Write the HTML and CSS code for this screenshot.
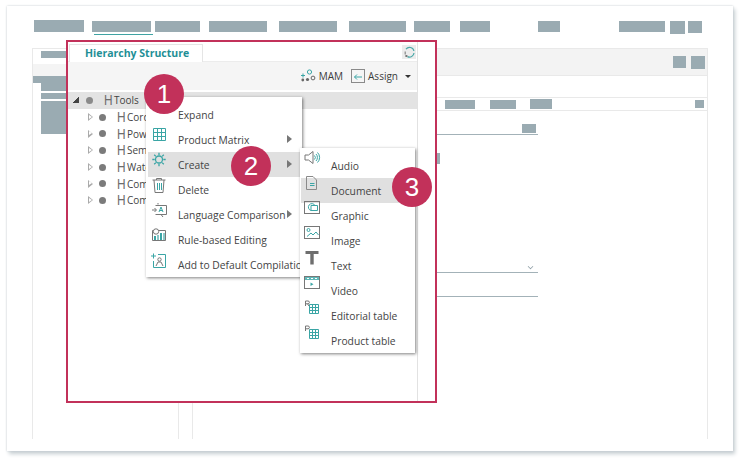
FILE: index.html
```html
<!DOCTYPE html>
<html lang="en">
<head>
<meta charset="utf-8">
<title>Hierarchy Structure</title>
<link rel="stylesheet" href="styles.css">
</head>
<body>
<div class="card">
  <nav class="nav">
    <span class="r n1"></span>
    <span class="r n2 active"></span>
    <span class="r n3"></span>
    <span class="r n4"></span>
    <span class="r n5"></span>
    <span class="r n6"></span>
    <span class="r n7"></span>
    <span class="r n8"></span>
    <span class="r n9"></span>
    <span class="r n10"></span>
    <span class="r n11"></span>
    <span class="r n12"></span>
  </nav>
  <div class="workspace">
    <aside class="left">
      <div class="left-top"><span class="r lt"></span></div>
      <div class="left-band"></div>
      <div class="r l1"></div>
      <div class="r l2"></div>
      <div class="r l3"></div>
      <div class="r l4"></div>
    </aside>
    <main class="right">
      <div class="right-head"><span class="r rh1"></span><span class="r rh2"></span></div>
      <div class="right-tabs">
        <span class="r rt1"></span><span class="r rt2"></span><span class="r rt3"></span><span class="r rt4"></span>
      </div>
      <div class="form">
        <div class="field f1"><span class="r fb"></span></div>
        <div class="r fc"></div>
        <div class="field f2"><span class="chev"></span></div>
        <div class="field f3"></div>
      </div>
    </main>
  </div>

  <section class="frame">
    <div class="panel">
      <div class="tabbar">
        <div class="tab">Hierarchy Structure</div>
        <button class="refresh" aria-label="Refresh">
          <svg width="13" height="13" viewBox="0 0 13 13" fill="none"><path d="M3 3.2A4.4 4.4 0 0 1 10.9 5" stroke="#4aa8a8" stroke-width="1.2"/><path d="M11 7a4.5 4.5 0 0 1-6.5 3.6" stroke="#4aa8a8" stroke-width="1.2"/><path d="M2.2 5.5v3" stroke="#888" stroke-width="1.2"/><rect x="2.4" y="9" width="2" height="2" fill="#777"/></svg>
        </button>
      </div>
      <div class="toolbar">
        <span class="tool">
          <svg width="15" height="15" viewBox="0 0 15 15" fill="none"><circle cx="8.5" cy="3" r="2.1" stroke="#3aa5a5"/><circle cx="12" cy="9" r="1.9" stroke="#666"/><circle cx="6.5" cy="10.5" r="1.6" fill="#666"/><circle cx="1.8" cy="11" r="1.4" fill="#666"/><path d="M0 6.5h4M2 4.5v4" stroke="#3aa5a5"/></svg>
          MAM
        </span>
        <span class="tool assign">
          <svg width="14" height="14" viewBox="0 0 14 14" fill="none"><rect x=".5" y=".5" width="13" height="13" stroke="#8a8a8a"/><path d="M11 8H3.5M6 5.5 3.5 8 6 10.5" stroke="#3aa5a5"/></svg>
          Assign
        </span>
        <span class="caret"></span>
      </div>
      <ul class="tree">
        <li class="node root"><i class="tw open"></i><i class="dot"></i><b class="h">H</b><span>Tools</span></li>
        <li class="node"><i class="tw"></i><i class="dot"></i><b class="h">H</b><span>Cordless</span></li>
        <li class="node"><i class="tw"></i><i class="dot"></i><b class="h">H</b><span>Power</span></li>
        <li class="node"><i class="tw"></i><i class="dot"></i><b class="h">H</b><span>Semi</span></li>
        <li class="node"><i class="tw"></i><i class="dot"></i><b class="h">H</b><span>Water</span></li>
        <li class="node"><i class="tw"></i><i class="dot"></i><b class="h">H</b><span>Compact</span></li>
        <li class="node"><i class="tw"></i><i class="dot"></i><b class="h">H</b><span>Compressed</span></li>
      </ul>
    </div>

    <ul class="menu main-menu">
      <li><span class="ico"><svg width="16" height="16" viewBox="0 0 16 16" fill="none"><path d="M6 9.5 7 11l2-2.5" stroke="#777"/></svg></span>Expand</li>
      <li class="sub"><span class="ico"><svg width="16" height="16" viewBox="0 0 16 16" fill="none"><path d="M2.5 1.5h12v12h-12zM2.500 5.500h12M2.500 9.500h12M6.500 1.500v12M10.500 1.500v12" stroke="#3aa5a5"/></svg></span>Product Matrix</li>
      <li class="sub on"><span class="ico"><svg width="16" height="16" viewBox="0 0 16 16" fill="none"><circle cx="8" cy="7.500" r="3.500" stroke="#3aa5a5" stroke-width="1.300"/><path d="M8 .8v2.400M8 11.800v2.400M1.300 7.500h2.400M12.300 7.500h2.400M3.200 2.700l1.700 1.700M11.100 10.600l1.700 1.700M3.200 12.300l1.700-1.700M11.100 4.400l1.700-1.700" stroke="#3aa5a5" stroke-width="1.300"/></svg></span>Create</li>
      <li><span class="ico"><svg width="16" height="16" viewBox="0 0 16 16" fill="none"><path d="M1.500 3h13M5.500 3V1.500h5V3M3 3l1 12.500h8L13 3" stroke="#777"/><path d="M6.500 6v7M8.500 6v7M10.500 6v7" stroke="#3aa5a5"/></svg></span>Delete</li>
      <li class="sub"><span class="ico"><svg width="17" height="16" viewBox="0 0 17 16" fill="none"><path d="M4.500 3.500h11v9h-11" stroke="#777"/><path d="M1 8h4M3.500 6 5.500 8l-2 2M7 2.500V1M12 15l-2-2.500" stroke="#777"/><path d="M8 10l2-5 2 5M8.800 8.500h2.500" stroke="#3aa5a5"/></svg></span>Language Comparison</li>
      <li><span class="ico"><svg width="16" height="16" viewBox="0 0 16 16" fill="none"><path d="M1.500 3.500h13v10h-13z" stroke="#777"/><circle cx="5" cy="4.500" r="2.700" fill="#fff" stroke="#777"/><rect x="3" y="9" width="2" height="4" fill="#3aa5a5"/><rect x="6" y="8" width="2" height="5" fill="#8cc9c9"/><rect x="9" y="6" width="2" height="7" fill="#3aa5a5"/><rect x="12" y="6" width="2" height="7" fill="#8cc9c9"/></svg></span>Rule-based Editing</li>
      <li><span class="ico"><svg width="16" height="17" viewBox="0 0 16 17" fill="none"><path d="M0 4h5M2.500 1.500v5M7 2.500h7.500v13H2.500V9" stroke="#3aa5a5"/><circle cx="8.500" cy="7.500" r="1.700" stroke="#777"/><path d="M5 14l2-4h3l2 4" stroke="#777"/></svg></span>Add to Default Compilation</li>
    </ul>

    <ul class="menu sub-menu">
      <li><span class="ico"><svg width="17" height="16" viewBox="0 0 17 16" fill="none"><path d="M1 5h3.500L9 1.500v12L4.500 10H1z" stroke="#777"/><path d="M10.500 5.500a3 3 0 0 1 0 4M12 4a5 5 0 0 1 0 7M13.500 2.500a7 7 0 0 1 0 10" stroke="#3aa5a5"/></svg></span>Audio</li>
      <li class="on"><span class="ico"><svg width="15" height="16" viewBox="0 0 15 16" fill="none"><path d="M2.500 1.500h6.500l3.500 3.500v9.500h-10z" stroke="#8a8a8a"/><path d="M6 8.500h4.500M6 10.500h4.500" stroke="#3aa5a5"/></svg></span>Document</li>
      <li><span class="ico"><svg width="16" height="16" viewBox="0 0 16 16" fill="none"><rect x=".5" y="1.500" width="15" height="12" stroke="#777"/><path d="M11 5.500A3.500 3.500 0 1 0 7 10.500M7 10.500V5.500h6.500v5z" stroke="#3aa5a5"/></svg></span>Graphic</li>
      <li><span class="ico"><svg width="16" height="16" viewBox="0 0 16 16" fill="none"><rect x=".5" y="1.500" width="15" height="12" stroke="#777"/><circle cx="4.500" cy="5" r="1.500" stroke="#3aa5a5"/><path d="M3 11.500 7 8l2 2 3-3 2.500 3" stroke="#3aa5a5"/></svg></span>Image</li>
      <li><span class="ico"><svg width="16" height="16" viewBox="0 0 16 16"><path d="M1.500 1h13v3H9.700v10.500H6.300V4H1.500z" fill="#6e6e6e"/></svg></span>Text</li>
      <li><span class="ico"><svg width="16" height="16" viewBox="0 0 16 16" fill="none"><rect x=".5" y="1.500" width="15" height="12" stroke="#777"/><rect x="1" y="2" width="14" height="3" fill="#5fb8b8"/><path d="M3 3.500h2M7 3.500h2M11 3.500h2" stroke="#fff"/><path d="M6.500 7.500v3.500l3-1.700z" fill="#3aa5a5"/></svg></span>Video</li>
      <li><span class="ico"><svg width="16" height="16" viewBox="0 0 16 16" fill="none"><path d="M5.500 4.500h9v9h-9zM5.500 7.500h9M5.500 10.500h9M8.500 4.500v9M11.500 4.500v9" stroke="#3aa5a5"/><path d="M1.500 6V1h2.500a1.300 1.300 0 0 1 0 2.800H1.500M3.500 3.800 5 6" stroke="#777"/></svg></span>Editorial table</li>
      <li><span class="ico"><svg width="16" height="16" viewBox="0 0 16 16" fill="none"><path d="M5.500 4.500h9v9h-9zM5.500 7.500h9M5.500 10.500h9M8.500 4.500v9M11.500 4.500v9" stroke="#3aa5a5"/><path d="M1.500 6V1h2.500a1.300 1.300 0 0 1 0 2.800H1.500" stroke="#777"/></svg></span>Product table</li>
    </ul>

    <span class="badge b1">1</span>
    <span class="badge b2">2</span>
    <span class="badge b3">3</span>
  </section>
</div>
</body>
</html>
```

FILE: styles.css
```css
* { box-sizing: border-box; }
html, body { margin: 0; padding: 0; background: #fff; }
body { width: 741px; height: 459px; overflow: hidden; font-family: "Open Sans", "Liberation Sans", sans-serif; }
ul { list-style: none; margin: 0; padding: 0; }
.r { display: block; background: #9aabb2; }

.card {
  position: relative;
  width: 726px;
  height: 445px;
  margin: 6px 0 0 7px;
  padding: 14px 0 0 0;
  background: #fff;
  box-shadow: 0 0 2px #c6ced2, 2px 3px 4px #c6ced2;
}

.nav { display: flex; align-items: flex-start; height: 14px; padding-left: 27px; }
.n1 { width: 50px; height: 12px; }
.n2 { width: 59px; height: 11px; margin: 1px 0 0 8px; box-shadow: 2px 2px 0 -0px #fff, 2px 3px 0 0 #3fa3a3; }
.n3 { width: 45px; height: 11px; margin: 1px 0 0 4px; }
.n4 { width: 58px; height: 11px; margin: 1px 0 0 9px; }
.n5 { width: 58px; height: 11px; margin: 1px 0 0 12px; }
.n6 { width: 57px; height: 11px; margin: 1px 0 0 12px; }
.n7 { width: 36px; height: 11px; margin: 1px 0 0 8px; }
.n8 { width: 30px; height: 11px; margin: 1px 0 0 10px; }
.n9 { width: 22px; height: 11px; margin: 1px 0 0 48px; box-shadow: 44px 1px 0 -0px #fff; }
.n10 { width: 46px; height: 11px; margin: 1px 0 0 59px; }
.n11 { width: 15px; height: 13px; margin: 1px 0 0 5px; }
.n12 { width: 14px; height: 12px; margin: 1px 0 0 3px; }

.workspace { display: flex; height: 391px; margin-top: 14px; padding-left: 25px; gap: 13px; }
.left { width: 147px; height: 100%; border-left: 1px solid #e9e9e9; border-right: 1px solid #e9e9e9; border-top: 1px solid #e9e9e9; }
.left-top { height: 15px; padding: 2px 0 0 8px; }
.lt { width: 30px; height: 7px; }
.left-band { height: 12px; background: #f4f4f4; margin-bottom: 0; }
.l1 { width: 34px; height: 7px; }
.l2 { width: 26px; height: 8px; margin-left: 8px; }
.l3 { width: 26px; height: 6px; margin: 2px 0 0 8px; }
.l4 { width: 26px; height: 33px; margin: 2px 0 0 8px; }

.right { width: 516px; height: 100%; border-left: 1px solid #e9e9e9; border-right: 1px solid #e9e9e9; }
.right-head { display: flex; justify-content: flex-end; align-items: center; gap: 5px; height: 28px; padding-right: 2px; background: #f3f3f3; border-top: 1px solid #e9e9e9; border-bottom: 1px solid #e9e9e9; }
.rh1 { width: 13px; height: 12px; }
.rh2 { width: 14px; height: 13px; }
.right-tabs { display: flex; align-items: center; height: 14px; margin-top: 21px; padding-left: 252px; border-top: 1px solid #e9e9e9; border-bottom: 1px solid #e9e9e9; }
.rt1 { width: 30px; height: 9px; }
.rt2 { width: 26px; height: 9px; margin-left: 15px; }
.rt3 { width: 22px; height: 10px; margin-left: 14px; }
.rt4 { width: 9px; height: 8px; margin-left: 143px; }

.form { width: 118px; margin: 13px 0 0 227px; }
.field { border-bottom: 1px solid #a3b2b8; display: flex; justify-content: flex-end; align-items: flex-end; }
.f1 { height: 11px; padding: 0 2px 1px 0; }
.fb { width: 14px; height: 9px; }
.fc { width: 3px; height: 11px; margin: 18px 0 0 17px; }
.f2 { height: 109px; padding: 0 5px 3px 0; }
.chev { display: block; width: 5px; height: 5px; border-right: 1.500px solid #8b9ca3; border-bottom: 1.500px solid #8b9ca3; transform: rotate(45deg) scale(.8); }
.f3 { height: 24px; }

.frame {
  position: absolute;
  left: 59px;
  top: 34px;
  width: 371px;
  height: 363px;
  border: 2px solid #c2315a;
  background: #fff;
}
.panel { width: 350px; height: 100%; border-right: 1px solid #e2e2e2; }
.tabbar { display: flex; justify-content: space-between; align-items: flex-end; height: 20px; padding-left: 1px; border-bottom: 1px solid #ececec; }
.tab { width: 134px; height: 18px; margin-bottom: -1px; padding-left: 15px; border: 1px solid #e5e5e5; border-bottom: 0; background: #fff; color: #1f8f96; font-size: 10.500px; font-weight: 700; line-height: 16px; }
.refresh { display: flex; align-items: center; justify-content: center; width: 14px; height: 14px; margin: 0 1px 2px 0; padding: 0; border: 0; background: #ececec; }
.toolbar { display: flex; justify-content: flex-end; align-items: center; height: 28px; padding-right: 6px; background: #f5f5f5; }
.tool { display: flex; align-items: center; gap: 3px; color: #3c3c3c; font-size: 10px; }
.assign { margin-left: 8px; }
.caret { width: 0; height: 0; margin-left: 7px; border: 3px solid transparent; border-top-color: #333; border-bottom: 0; }

.tree { margin-top: 2px; }
.node { display: flex; align-items: center; height: 16.700px; padding-left: 20px; color: #444; font-size: 10px; white-space: nowrap; }
.root { padding-left: 5px; background: #e3e3e3; }
.tw { flex: none; width: 0; height: 0; border-style: solid; border-width: 4px 0 4px 5px; border-color: transparent transparent transparent #aaa; position: relative; }
.tw::after { content: ""; position: absolute; left: -4px; top: -2.500px; border-style: solid; border-width: 2.500px 0 2.500px 3px; border-color: transparent transparent transparent #fff; }
.tw.open { width: 6px; height: 6px; border: 0; background: linear-gradient(135deg, transparent 50%, #444 50%); }
.tw.open::after { display: none; }
.dot { flex: none; width: 7px; height: 7px; margin-left: 6px; border-radius: 50%; background: #7b7b7b; }
.root .dot { margin-left: 7px; background: #8a8a8a; }
.h { flex: none; width: 11px; margin-left: 11px; color: #6d6d6d; font-size: 14px; font-weight: 400; font-family: "Liberation Sans", sans-serif; line-height: 14px; transform: scaleX(.85); transform-origin: left center; }
.node .h + span { margin-left: -1px; }

.menu { position: absolute; background: #fff; box-shadow: 1px 1px 3px rgba(0,0,0,.5); color: #444; font-size: 10.300px; white-space: nowrap; }
.menu li { position: relative; display: flex; align-items: center; height: 25px; }
.menu .ico { position: absolute; top: 0; left: 3px; display: flex; }
.menu .on { background: #e0e0e0; }
.sub::after { content: ""; position: absolute; right: 8px; top: 8px; border-style: solid; border-width: 4.500px 0 4.500px 5px; border-color: transparent transparent transparent #777; }
.main-menu { left: 78px; top: 55px; width: 156px; height: 180px; padding: 5px 2px 0 2px; }
.main-menu li { padding-left: 30px; }
.sub-menu { left: 232px; top: 106px; width: 115px; height: 205px; padding: 5px 1px 0 1px; z-index: 1; }
.sub-menu li { padding-left: 30px; }
.sub-menu .ico { left: 3px; top: -3px; }
.main-menu .ico { top: 0; }

.badge { position: absolute; z-index: 2; display: flex; align-items: center; justify-content: center; width: 40px; height: 40px; border-radius: 50%; background: #c2315a; color: #fff; font-family: "Liberation Sans", sans-serif; font-size: 26px; }
.b1 { left: 76px; top: 32px; }
.b2 { left: 163px; top: 104px; }
.b3 { left: 324px; top: 125px; }
```
